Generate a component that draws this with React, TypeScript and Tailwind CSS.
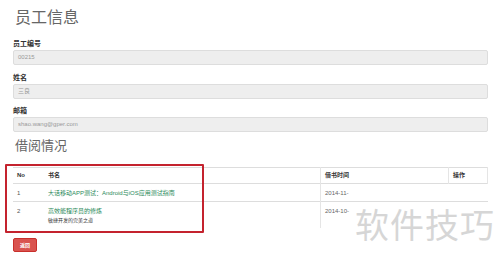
import React from 'react'

const books = [
  { no: 1, title: '大话移动APP测试：Android与iOS应用测试指南', sub: '', date: '2014-11-' },
  { no: 2, title: '高效能程序员的修炼', sub: '敏捷开发的完美之道', date: '2014-10-' },
]

const fields = [
  { label: '员工编号', value: '00215', mt: 'mt-[10px]' },
  { label: '姓名', value: '三良', mt: 'mt-[8px]' },
  { label: '邮箱', value: 'shao.wang@gper.com', mt: 'mt-[7px]' },
]

export default function App() {
  return (
    <div
      className="relative w-[500px] h-[263px] overflow-hidden bg-white"
      style={{ fontFamily: '"Liberation Sans", "Noto Sans CJK SC", sans-serif' }}
    >
      <div className="pl-[13px] pr-[12px] pt-[7px]">
        <h1 className="text-[16px] leading-[22px] text-[#666] pl-[2px]">员工信息</h1>

        {fields.map((f) => (
          <div key={f.label} className={f.mt}>
            <div className="text-[7px] leading-[9px] font-bold text-[#333]">{f.label}</div>
            <div className="mt-[2px] h-[15px] rounded-[2px] border border-[#ddd] bg-[#eee] pl-[4px] text-[6px] leading-[13px] text-[#999]">
              {f.value}
            </div>
          </div>
        ))}

        <h2 className="mt-[5px] text-[13px] leading-[18px] text-[#666] pl-[2px]">借阅情况</h2>

        <table className="mt-[12px] w-full border-collapse text-[6px] text-[#333]">
          <thead>
            <tr className="border-t border-[#ddd] border-b">
              <th className="w-[32px] h-[16px] text-left font-bold pl-[4px]">No</th>
              <th className="text-left font-bold pl-[3px]">书名</th>
              <th className="w-[128px] text-left font-bold pl-[4px] border-l border-[#e5e5e5]">借书时间</th>
              <th className="w-[39px] text-left font-bold pl-[4px] border-l border-r border-[#e5e5e5]">操作</th>
            </tr>
          </thead>
          <tbody>
            {books.map((b) => (
              <tr key={b.no} className="border-b border-[#ddd] last:border-b-0 align-top">
                <td className="pl-[4px] pt-[5px] h-[17px] text-[#555]">{b.no}</td>
                <td className="pl-[3px] pt-[5px] pb-[4px]">
                  <div className="text-[#2a8a5a] leading-[8px]">{b.title}</div>
                  {b.sub && <div className="mt-[2px] text-[5px] leading-[7px] text-[#333]">{b.sub}</div>}
                </td>
                <td className="pl-[4px] pt-[5px] text-[#666] border-l border-[#e5e5e5]">{b.date}</td>
                <td></td>
              </tr>
            ))}
          </tbody>
        </table>

        <button className="mt-[10px] w-[24px] h-[14px] rounded-[2px] bg-[#d9534f] border border-[#c9302c] text-white text-[5px] leading-[12px] font-bold">
          返回
        </button>
      </div>

      {/* annotation box */}
      <div className="absolute left-[5px] top-[164px] w-[199px] h-[69px] border-2 border-[#c4232e] rounded-[1px]" />

      {/* watermark */}
      <div className="absolute left-[355px] top-[206px] text-[34px] leading-[40px] tracking-[1px] text-[#d6d6d6] select-none">
        软件技巧
      </div>
    </div>
  )
}
